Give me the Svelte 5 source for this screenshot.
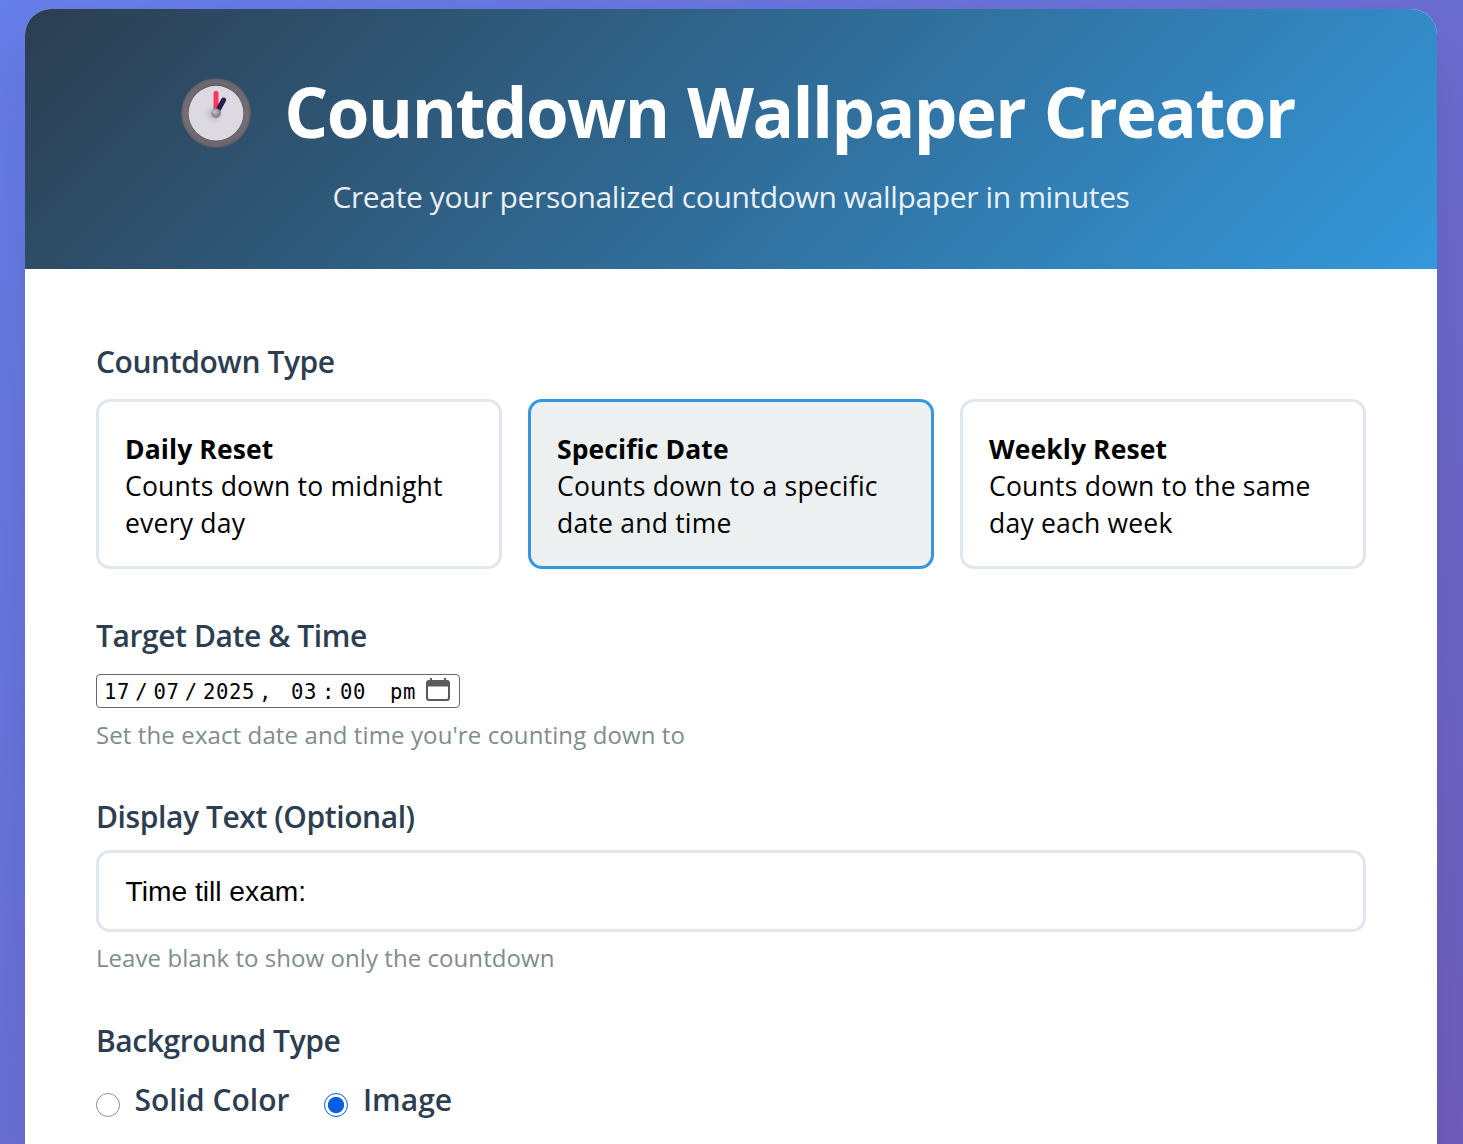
<script>
  let selectedType = $state('date');
  let background = $state('image');
  let text = $state('Time till exam:');

  const types = [
    { id: 'daily', title: 'Daily Reset', lines: ['Counts down to midnight', 'every day'] },
    { id: 'date', title: 'Specific Date', lines: ['Counts down to a specific', 'date and time'] },
    { id: 'weekly', title: 'Weekly Reset', lines: ['Counts down to the same', 'day each week'] }
  ];
</script>

<div class="page">
  <main class="panel">
    <header class="hero">
      <h1>
        <svg class="clock" viewBox="0 0 70 70" aria-hidden="true">
          <defs>
            <linearGradient id="rim" x1="0" y1="0" x2="0" y2="1">
              <stop offset="0" stop-color="#6a686d" />
              <stop offset="0.6" stop-color="#737176" />
              <stop offset="1" stop-color="#6b656c" />
            </linearGradient>
            <radialGradient id="edge">
              <stop offset="0.93" stop-color="#655f64" stop-opacity="0" />
              <stop offset="1" stop-color="#62575e" />
            </radialGradient>
            <radialGradient id="shade">
              <stop offset="0" stop-color="#aaa7ae" />
              <stop offset="1" stop-color="#dcdae0" stop-opacity="0" />
            </radialGradient>
            <radialGradient id="pin" cx="0.4" cy="0.35">
              <stop offset="0" stop-color="#c9c7cd" />
              <stop offset="1" stop-color="#858389" />
            </radialGradient>
          </defs>
          <circle cx="35" cy="35" r="34.6" fill="url(#rim)" />
          <circle cx="35" cy="35" r="34.6" fill="url(#edge)" />
          <circle cx="35" cy="35" r="28.2" fill="#5b575e" />
          <circle cx="35" cy="35.2" r="27.4" fill="#dcdae0" />
          <circle cx="33" cy="36" r="12" fill="url(#shade)" />
          <path d="M35 15.2V33" stroke="#f8365f" stroke-width="5" stroke-linecap="round" />
          <path d="M42.6 22L36.5 33" stroke="#2c1c4e" stroke-width="5" stroke-linecap="round" />
          <circle cx="35" cy="35.2" r="4.8" fill="url(#pin)" />
        </svg>
        <span>Countdown Wallpaper Creator</span>
      </h1>
      <p>Create your personalized countdown wallpaper in minutes</p>
    </header>

    <form class="content">
      <section class="group types-group">
        <h2>Countdown Type</h2>
        <div class="types">
          {#each types as type}
            <button
              type="button"
              class="type"
              class:selected={selectedType === type.id}
              onclick={() => (selectedType = type.id)}
            >
              <strong>{type.title}</strong>
              {#each type.lines as line}<span>{line}</span>{/each}
            </button>
          {/each}
        </div>
      </section>

      <section class="group target-group">
        <h2>Target Date &amp; Time</h2>
        <div class="datetime">
          <span class="two">17</span><span class="slash">/</span><span class="two">07</span><span class="slash">/</span><span class="year">2025</span><span class="comma">,</span><span class="two">03</span><span class="colon">:</span><span class="minutes">00</span><span class="two">pm</span>
          <svg class="calendar" viewBox="0 0 24 23" aria-hidden="true">
            <path fill="#5b5b5b" fill-rule="evenodd" d="M4 0h2v2h12V0h2v2h1a3 3 0 0 1 3 3v15a3 3 0 0 1-3 3H3a3 3 0 0 1-3-3V5a3 3 0 0 1 3-3h1zM2 8.500v11A1.500 1.500 0 0 0 3.500 21h17a1.500 1.500 0 0 0 1.500-1.500v-11z" />
          </svg>
        </div>
        <p class="help">Set the exact date and time you're counting down to</p>
      </section>

      <section class="group text-group">
        <h2>Display Text (Optional)</h2>
        <input class="text" type="text" bind:value={text} />
        <p class="help">Leave blank to show only the countdown</p>
      </section>

      <section class="group">
        <h2>Background Type</h2>
        <div class="radios">
          <label><input type="radio" value="solid" bind:group={background} />Solid Color</label>
          <label><input type="radio" value="image" bind:group={background} />Image</label>
        </div>
      </section>
    </form>
  </main>
</div>

<style>
  :global(body) {
    margin: 0;
    overflow: hidden;
  }

  .page {
    box-sizing: border-box;
    height: 1144px;
    padding: 9px 26px 0 25px;
    overflow: hidden;
    background: linear-gradient(135deg, #667eea 0%, #764ba2 100%) 0 0 / 100% 2750px no-repeat;
    font-family: 'Open Sans', 'Noto Sans', sans-serif;
  }

  .panel {
    height: 2500px;
    border-radius: 26px;
    overflow: hidden;
    background: #fff;
    box-shadow: 0 35px 71px rgba(0, 0, 0, 0.1);
  }

  .hero {
    box-sizing: border-box;
    height: 260px;
    padding-top: 57px;
    background: linear-gradient(135deg, #2c3e50, #3498db);
    color: #fff;
    text-align: center;
  }

  h1 {
    display: flex;
    align-items: center;
    justify-content: center;
    gap: 33px;
    margin: 0 0 20px;
    padding-left: 14px;
    font-size: 69px;
    font-weight: 700;
    line-height: 90px;
    letter-spacing: -1.55px;
    word-spacing: 2.500px;
    white-space: nowrap;
  }

  .clock {
    width: 70px;
    height: 70px;
    margin-top: 4px;
  }

  .hero p {
    margin: 0;
    font-size: 30px;
    line-height: 42px;
    letter-spacing: -0.370px;
    opacity: 0.9;
  }

  .content {
    padding: 73px 71px 0;
  }

  h2 {
    margin: 0 0 18px;
    color: #2c3e50;
    font-size: 30px;
    font-weight: 600;
    line-height: 40px;
    letter-spacing: -0.42px;
  }

  .group {
    margin-bottom: 45px;
  }

  .types-group {
    margin-bottom: 47px;
  }

  .types-group h2 {
    margin-bottom: 17px;
  }

  .types {
    display: grid;
    grid-template-columns: repeat(3, 1fr);
    gap: 26px;
  }

  .type {
    display: flex;
    flex-direction: column;
    box-sizing: border-box;
    height: 170px;
    padding: 29px 26px 0;
    border: 3px solid #e0e6ed;
    border-radius: 14px;
    background: #fff;
    color: #000;
    font: 400 26.5px/37px 'Open Sans', 'Noto Sans', sans-serif;
    letter-spacing: 0.22px;
    text-align: left;
    white-space: nowrap;
  }

  .type strong {
    letter-spacing: 0.1px;
  }

  .type.selected {
    border-color: #3498db;
    background: #ecf0f1;
  }

  .datetime {
    display: flex;
    align-items: center;
    box-sizing: border-box;
    width: 364px;
    height: 34px;
    padding: 1px 0 0 7px;
    border: 1px solid #67677a;
    border-radius: 4px;
    color: #000;
    font: 20.6px/32px 'DejaVu Sans Mono', monospace;
    letter-spacing: 0.6px;
  }

  .two { width: 26px; }
  .slash { width: 23.500px; text-align: center; }
  .year { width: 52px; }
  .comma { width: 36px; text-indent: 4px; }
  .colon { width: 23px; text-align: center; }
  .minutes { width: 50px; }

  .calendar {
    width: 24px;
    height: 23px;
    margin: 0 0 4px 10px;
  }

  .help {
    margin: 10px 0 0;
    color: #7f8c8d;
    font-size: 24px;
    line-height: 34px;
    letter-spacing: 0.11px;
  }

  .text-group h2 {
    margin-bottom: 13px;
  }

  .text-group .help {
    margin-top: 9px;
    letter-spacing: 0.06px;
  }

  .text-group {
    margin-bottom: 46px;
  }

  .text {
    display: block;
    box-sizing: border-box;
    width: 100%;
    height: 82px;
    padding: 0 26px;
    border: 3px solid #e0e6ed;
    border-radius: 14px;
    outline: 0;
    background: #fff;
    color: #000;
    font: 28.2px 'Liberation Sans', Arial, sans-serif;
    text-indent: 0.500px;
  }

  .radios {
    display: flex;
    gap: 35px;
    padding-top: 1px;
  }

  .radios label {
    display: flex;
    align-items: center;
    color: #2c3e50;
    font-size: 30px;
    font-weight: 600;
    line-height: 40px;
  }

  .radios input {
    appearance: none;
    box-sizing: border-box;
    width: 24px;
    height: 24px;
    margin: 10px 14.500px 0 0;
    border: 1px solid #8f8f9d;
    border-radius: 50%;
    background: #fff;
  }

  .radios input:checked {
    border-color: #0060df;
    background: radial-gradient(circle, #0060df 0 7.700px, #fff 8.500px);
  }
</style>
